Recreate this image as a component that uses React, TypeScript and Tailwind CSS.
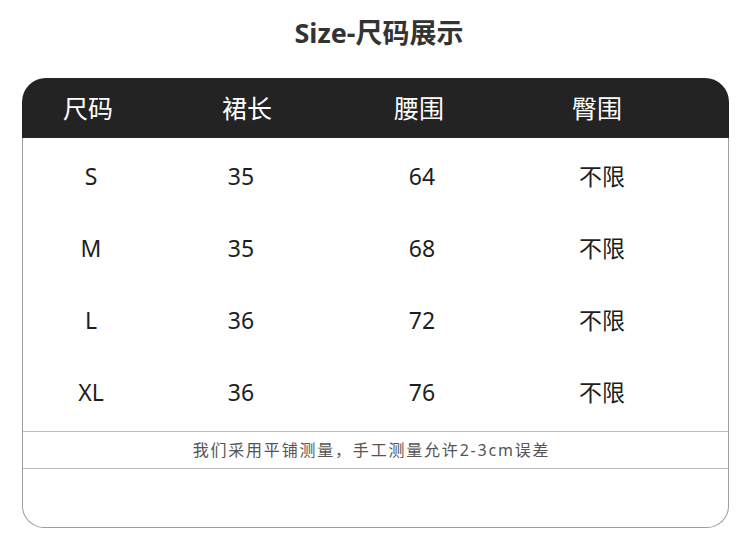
const font = { fontFamily: '"Noto Sans", "Noto Sans CJK SC", sans-serif' };

const headers = [
  { label: '尺码', w: 'w-[132px]' },
  { label: '裙长', w: 'w-[186px]' },
  { label: '腰围', w: 'w-[158px]' },
  { label: '臀围', w: 'w-[198px]' },
];

const colWidths = ['w-[136px]', 'w-[164px]', 'w-[198px]', 'w-[162px]'];

const rows = [
  ['S', '35', '64', '不限'],
  ['M', '35', '68', '不限'],
  ['L', '36', '72', '不限'],
  ['XL', '36', '76', '不限'],
];

export default function App() {
  return (
    <div className="w-[750px] h-[558px] bg-white" style={font}>
      <div className="h-[64px] flex items-center justify-center pl-[8px]">
        <h1 className="text-[27px] font-bold text-[#333] leading-none">Size-尺码展示</h1>
      </div>

      <div className="mt-[14px] ml-[22px] w-[707px]">
        <div className="h-[60px] bg-[#232323] rounded-t-[24px] flex items-center">
          {headers.map((h) => (
            <div key={h.label} className={`${h.w} text-center text-white text-[25px] leading-none`}>
              {h.label}
            </div>
          ))}
        </div>

        <div className="border-x border-b border-[#9e9e9e] rounded-b-[22px]">
          <div className="pt-[2px] pb-[3px]">
            {rows.map((r) => (
              <div key={r[0]} className="h-[72px] flex items-center">
                {r.map((cell, i) => (
                  <div key={i} className={`${colWidths[i]} text-center text-[23px] text-[#1e1e1e] leading-none`}>
                    {cell}
                  </div>
                ))}
              </div>
            ))}
          </div>
          <div className="h-[38px] border-y border-[#bdbdbd] flex items-center justify-center">
            <span className="text-[16px] text-[#555] tracking-[1.8px] leading-none pr-[8px]">
              我们采用平铺测量，手工测量允许2-3cm误差
            </span>
          </div>
          <div className="h-[58px]" />
        </div>
      </div>
    </div>
  );
}
